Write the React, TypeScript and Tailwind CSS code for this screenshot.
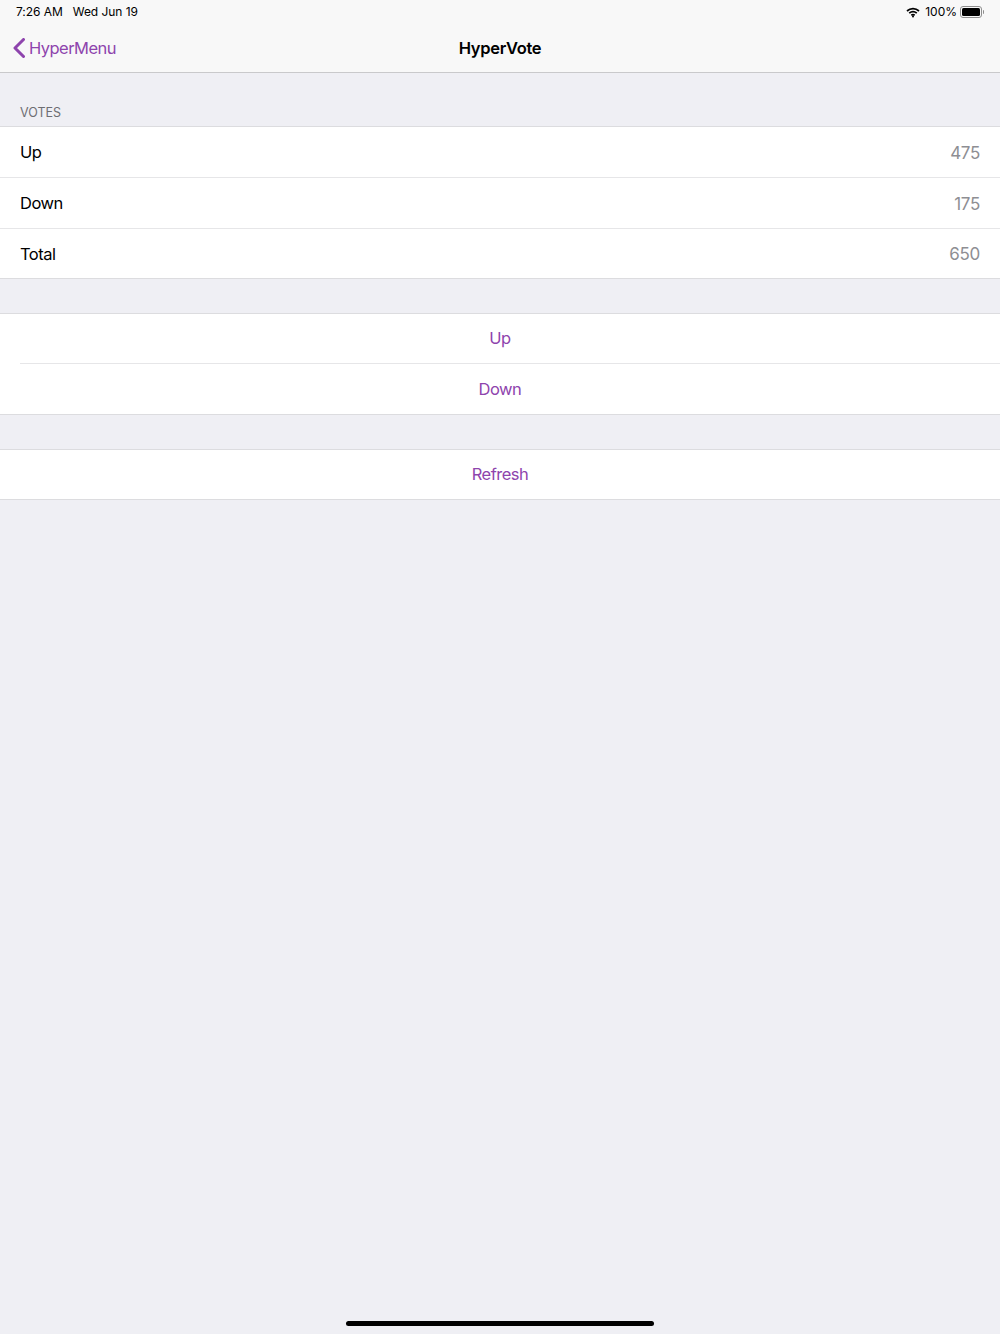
import React from "react";

const font = { fontFamily: "Inter, 'Liberation Sans', sans-serif" };

const votes = [
  { label: "Up", value: 475 },
  { label: "Down", value: 175 },
  { label: "Total", value: 650 },
];

const StatusBar = () => (
  <div className="h-6 flex items-center justify-between pl-4 pr-4 text-[12px] text-black">
    <div className="flex gap-[10px] tracking-[-0.05px]">
      <span>7:26 AM</span>
      <span>Wed Jun 19</span>
    </div>
    <div className="flex items-center gap-[5px]">
      <svg width="14" height="11" viewBox="0 0 14 11" fill="none" stroke="black" strokeWidth="1.7">
        <path d="M1 4 C4.500 0.800 9.500 0.800 13 4" />
        <path d="M3.200 6.200 C5.400 4.300 8.600 4.300 10.800 6.200" />
        <path d="M5.300 8.200 C6.300 7.500 7.700 7.500 8.700 8.200" />
        <circle cx="7" cy="9.600" r="1" fill="black" stroke="none" />
      </svg>
      <span className="-mr-[2px]">100%</span>
      <div className="flex items-center">
        <div className="w-[22px] h-[12px] rounded-[3px] border border-[#8e8e8e] p-px">
          <div className="w-full h-full rounded-[1.500px] bg-black" />
        </div>
        <div className="w-px h-1 ml-px bg-[#8e8e8e] rounded-r-sm" />
      </div>
    </div>
  </div>
);

const NavBar = () => (
  <div className="relative h-[48px] flex items-center justify-center">
    <div className="absolute left-[13px] top-[14px] flex items-center gap-[4px] text-[#8e44ad]">
      <svg width="12" height="20" viewBox="0 0 12 20" fill="none" stroke="#8e44ad" strokeWidth="3" strokeLinecap="round" strokeLinejoin="round">
        <path d="M10.500 1.500 L2 10 L10.500 18.500" />
      </svg>
      <span className="text-[16.500px] tracking-[-0.55px] leading-5">HyperMenu</span>
    </div>
    <span className="text-[16.500px] tracking-[-0.3px] font-semibold text-black">HyperVote</span>
  </div>
);

export default function App() {
  return (
    <div className="relative min-h-[1334px] bg-[#efeff4]" style={font}>
      <div className="bg-[#f8f8f8] border-b border-[#c9c9cb]">
        <StatusBar />
        <NavBar />
      </div>

      <div className="pt-[32px] pb-[5px] pl-5 text-[12.500px] leading-[16px] text-[#6d6d72]">VOTES</div>
      <div className="bg-white border-y border-[#dcdcdf]">
        {votes.map((v, i) => (
          <div key={v.label} className={i < 2 ? "h-[51px] flex items-center pl-5 border-b border-[#e6e6e8]" : "h-[49px] flex items-center pl-5"}>
            <span className="flex-1 text-[16.500px] leading-6 tracking-[-0.5px] text-black">{v.label}</span>
            <span className="pr-5 pt-px text-[17px] leading-6 tracking-[-0.3px] text-[#8e8e93]">{v.value}</span>
          </div>
        ))}
      </div>

      <div className="mt-[34px] bg-white border-y border-[#dcdcdf]">
        <div className="ml-5 h-[50px] flex items-center justify-center border-b border-[#e6e6e8]">
          <span className="-ml-5 pb-px text-[16.500px] leading-6 tracking-[-0.5px] text-[#8e44ad]">Up</span>
        </div>
        <div className="h-[50px] flex items-center justify-center text-[16.500px] leading-6 tracking-[-0.5px] text-[#8e44ad]">Down</div>
      </div>

      <div className="mt-[34px] bg-white border-y border-[#dcdcdf]">
        <div className="h-[49px] pb-[2px] flex items-center justify-center text-[16.500px] leading-6 tracking-[-0.5px] text-[#8e44ad]">Refresh</div>
      </div>

      <div className="absolute left-[346px] top-[1321px] w-[308px] h-[5px] rounded-full bg-black" />
    </div>
  );
}
